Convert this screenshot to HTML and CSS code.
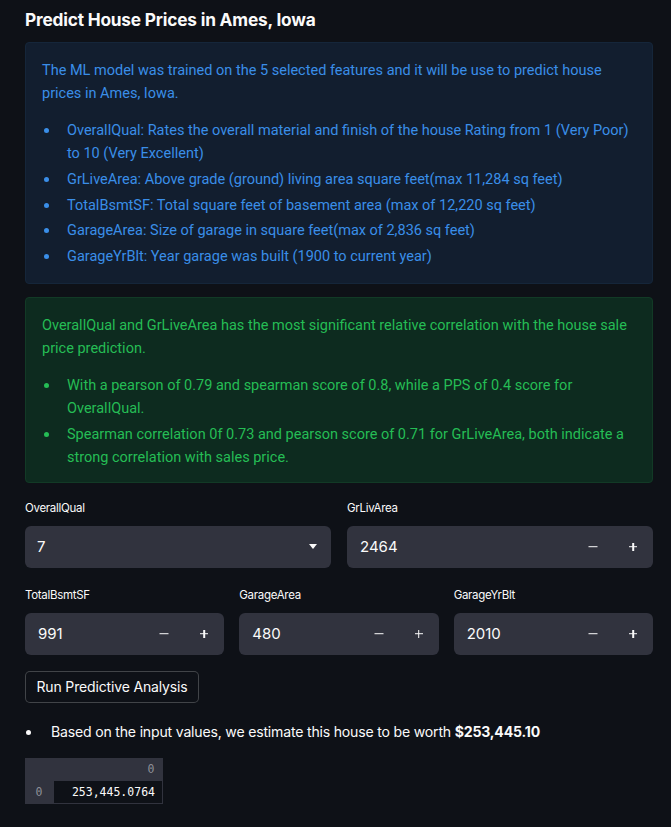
FILE: index.html
```html
<!DOCTYPE html>
<html>
<head>
<meta charset="utf-8">
<link rel="stylesheet" href="styles.css">
</head>
<body>
<main class="page">
  <h1 class="title">Predict House Prices in Ames, Iowa</h1>

  <section class="alert alert-info">
    <p>The ML model was trained on the 5 selected features and it will be use to predict house prices in Ames, Iowa.</p>
    <ul>
      <li>OverallQual: Rates the overall material and finish of the house Rating from 1 (Very Poor) to 10 (Very Excellent)</li>
      <li>GrLiveArea: Above grade (ground) living area square feet(max 11,284 sq feet)</li>
      <li>TotalBsmtSF: Total square feet of basement area (max of 12,220 sq feet)</li>
      <li>GarageArea: Size of garage in square feet(max of 2,836 sq feet)</li>
      <li>GarageYrBlt: Year garage was built (1900 to current year)</li>
    </ul>
  </section>

  <section class="alert alert-success">
    <p>OverallQual and GrLiveArea has the most significant relative correlation with the house sale price prediction.</p>
    <ul>
      <li>With a pearson of 0.79 and spearman score of 0.8, while a PPS of 0.4 score for OverallQual.</li>
      <li>Spearman correlation 0f 0.73 and pearson score of 0.71 for GrLiveArea, both indicate a strong correlation with sales price.</li>
    </ul>
  </section>

  <div class="row row-2">
    <div class="field">
      <label class="label">OverallQual</label>
      <div class="select">
        <span class="value">7</span>
        <svg class="caret" width="8" height="5" viewBox="0 0 8 5"><path d="M0 0 H8 L4 5 Z" fill="#fafafa"/></svg>
      </div>
    </div>
    <div class="field">
      <label class="label">GrLivArea</label>
      <div class="number">
        <span class="value">2464</span>
        <span class="step minus"></span>
        <span class="step plus"></span>
      </div>
    </div>
  </div>

  <div class="row row-3">
    <div class="field">
      <label class="label">TotalBsmtSF</label>
      <div class="number">
        <span class="value">991</span>
        <span class="step minus"></span>
        <span class="step plus"></span>
      </div>
    </div>
    <div class="field">
      <label class="label">GarageArea</label>
      <div class="number">
        <span class="value">480</span>
        <span class="step minus"></span>
        <span class="step plus"></span>
      </div>
    </div>
    <div class="field">
      <label class="label">GarageYrBlt</label>
      <div class="number">
        <span class="value">2010</span>
        <span class="step minus"></span>
        <span class="step plus"></span>
      </div>
    </div>
  </div>

  <button class="btn">Run Predictive Analysis</button>

  <ul class="result">
    <li>Based on the input values, we estimate this house to be worth <strong>$253,445.10</strong></li>
  </ul>

  <table class="df">
    <thead>
      <tr><th class="idx"></th><th class="col">0</th></tr>
    </thead>
    <tbody>
      <tr><th class="idx">0</th><td class="cell">253,445.0764</td></tr>
    </tbody>
  </table>
</main>
</body>
</html>
```

FILE: styles.css
```css
html, body {
  margin: 0;
  padding: 0;
  background: #0e1117;
  color: #fafafa;
  font-family: "Inter", "Liberation Sans", sans-serif;
}

.page {
  width: 628px;
  padding: 6px 0 20px 25px;
}

.title {
  margin: 0 0 8px;
  font-family: "Inter", sans-serif;
  font-weight: 700;
  font-size: 17.3px;
  line-height: 28px;
  letter-spacing: -0.2px;
  color: #fafafa;
}

.alert {
  border-radius: 4px;
  padding: 16px 16px 15px;
  font-family: "Roboto", sans-serif;
  font-size: 14.5px;
  line-height: 23px;
  letter-spacing: 0;
}

.alert p {
  margin: 0 0 14px;
}

.alert ul {
  margin: 0;
  padding: 0 0 0 25px;
  list-style: none;
}

.alert li {
  position: relative;
}

.alert li::before {
  content: "";
  position: absolute;
  left: -23px;
  top: 9px;
  width: 5px;
  height: 5px;
  border-radius: 50%;
  background: currentColor;
}

.alert li + li {
  margin-top: 2.75px;
}

.alert-info {
  background: #121e2f;
  border: 1px solid #15263a;
  color: #3a8ee8;
}

.alert-success {
  margin-top: 13px;
  background: #0d2b1f;
  border: 1px solid #123a26;
  color: #25bd55;
  padding-bottom: 13px;
}

.row {
  display: grid;
  gap: 16px;
}

.row-2 {
  grid-template-columns: 1fr 1fr;
  margin-top: 16px;
}

.row-3 {
  grid-template-columns: 1fr 1fr 1fr;
  margin-top: 18px;
  gap: 15px;
}

.field {
  display: flex;
  flex-direction: column;
}

.label {
  font-size: 11.5px;
  line-height: 18px;
  height: 18px;
  margin-bottom: 9px;
  letter-spacing: -0.3px;
  color: #fafafa;
}

.select, .number {
  height: 42px;
  background: #31333e;
  border-radius: 6px;
  display: flex;
  align-items: center;
  font-size: 15px;
}

.select {
  padding: 0 14px 0 12px;
  justify-content: space-between;
}

.number {
  padding-left: 13px;
}

.number .value {
  flex: 1;
}

.step {
  width: 40px;
  height: 42px;
  position: relative;
}

.step::before,
.step::after {
  content: "";
  position: absolute;
  background: #fafafa;
  left: 50%;
  top: 50%;
}

.minus::before {
  width: 9px;
  height: 1.6px;
  transform: translate(-50%, -50%);
}

.minus::after {
  display: none;
}

.plus::before {
  width: 8px;
  height: 1.6px;
  transform: translate(-50%, -50%);
}

.plus::after {
  width: 1.6px;
  height: 8px;
  transform: translate(-50%, -50%);
}

.btn {
  margin-top: 16px;
  display: block;
  height: 32px;
  width: 174px;
  padding: 0;
  background: #0e1117;
  border: 1px solid rgba(250, 250, 250, 0.22);
  border-radius: 5px;
  color: #fafafa;
  font-family: "Inter", sans-serif;
  font-size: 14px;
  letter-spacing: -0.15px;
}

.result {
  margin: 17px 0 0;
  padding: 0 0 0 26px;
  list-style: none;
  font-size: 14.1px;
  line-height: 24px;
  letter-spacing: -0.2px;
}

.result li {
  position: relative;
}

.result li::before {
  content: "";
  position: absolute;
  left: -25px;
  top: 10px;
  width: 5px;
  height: 5px;
  border-radius: 50%;
  background: #fafafa;
}

.result strong {
  font-weight: 700;
}

.df {
  margin-top: 14px;
  border-collapse: collapse;
  font-family: "DejaVu Sans Mono", monospace;
  font-size: 11.5px;
}

.df th, .df td {
  height: 23px;
  padding: 0;
  font-weight: 400;
}

.df thead th {
  background: #31333e;
  color: #8d8f96;
  text-align: right;
}

.df .idx {
  width: 28px;
  background: #31333e;
  color: #8d8f96;
  text-align: center;
}

.df .col {
  width: 109px;
  padding-right: 8px;
  box-sizing: border-box;
}

.df .cell {
  width: 109px;
  box-sizing: border-box;
  background: #0e1117;
  border: 1px solid #31333e;
  text-align: right;
  padding-right: 7px;
  color: #fafafa;
}
```
